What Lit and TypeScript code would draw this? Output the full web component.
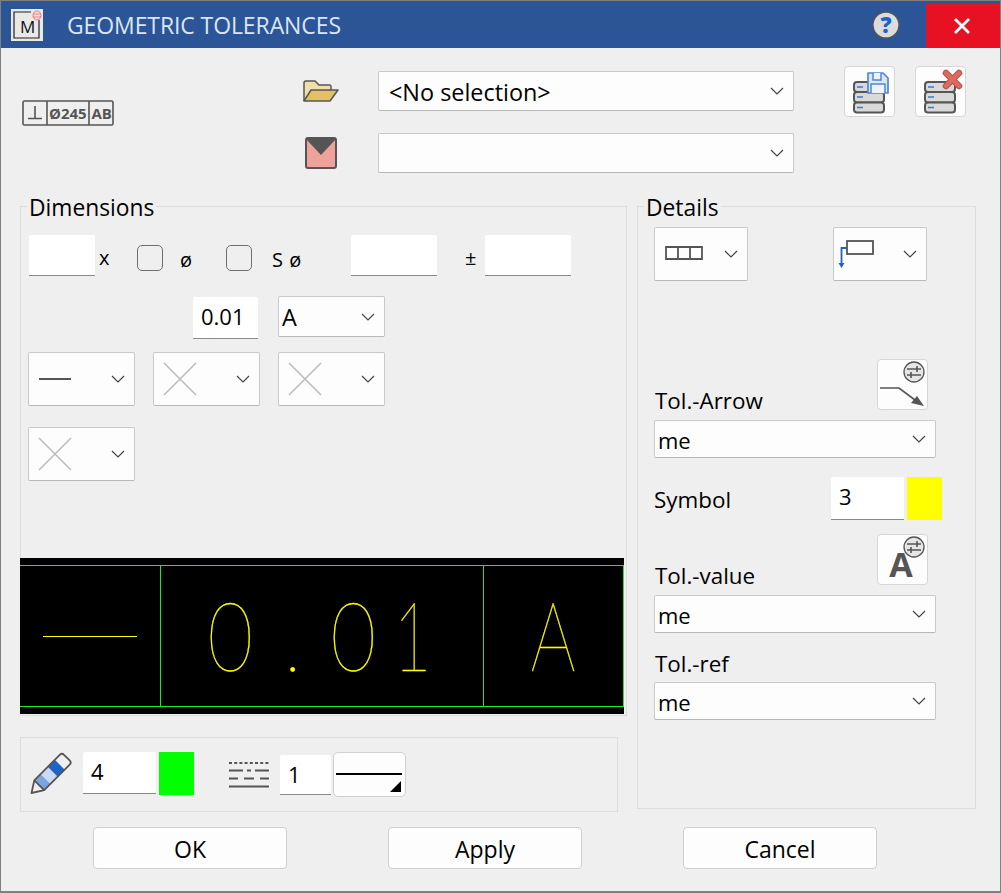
import { LitElement, html, css, svg } from "lit";
import { customElement } from "lit/decorators.js";

const chevron = html`<svg class="chev" width="14" height="8" viewBox="0 0 14 8"><path d="M1 1l6 6 6-6" fill="none" stroke="#444" stroke-width="1.2"/></svg>`;
const cross = html`<svg width="32" height="32" viewBox="0 0 32 32"><path d="M0 0L32 32M32 0L0 32" stroke="#bdbdbd" stroke-width="1.6"/></svg>`;
const dbStack = svg`
  <g fill="#d9d9d9" stroke="#555" stroke-width="2">
    <rect x="10" y="16" width="30" height="10" rx="3"/>
    <rect x="10" y="26" width="30" height="10.500" rx="3"/>
    <rect x="10" y="36.500" width="30" height="10" rx="3"/>
  </g>
  <path d="M13 21h6M13 31h6M13 41.500h6" stroke="#3b78d0" stroke-width="1.600"/>`;
const sliders = svg`
  <circle cx="37" cy="13" r="10" fill="#e6e6e6" stroke="#555" stroke-width="1.300"/>
  <path d="M30 10h14M30 16h14M40 7v6M34 13v6" stroke="#555" stroke-width="1.600" fill="none"/>`;

@customElement("app-root")
export class AppRoot extends LitElement {
  static styles = css`
    :host { display: block; width: 1001px; height: 893px; font-family: "Open Sans", "Noto Sans", sans-serif; color: #000; }
    * { box-sizing: border-box; }
    svg { display: block; flex: none; overflow: visible; }
    .frame { width: 1001px; height: 893px; background: #efefef; border: 1px solid #808080; border-bottom-width: 2px; overflow: hidden; }
    .titlebar { height: 47px; background: #2b5597; display: flex; align-items: center; padding-left: 10px; }
    .title { margin-left: 24px; color: #dbe6f4; font-size: 23px; line-height: 47px; padding-top: 1px; flex: 1; white-space: nowrap; letter-spacing: -0.1px; }
    .help { margin-right: 26px; }
    .close { width: 74px; height: 45px; align-self: flex-end; background: #e81123; display: flex; align-items: center; justify-content: center; padding-right: 2px; }

    .top { height: 158px; display: flex; align-items: flex-start; }
    .tol { margin: 52px 0 0 21px; }
    .pickers { margin: 23px 0 0 189px; display: grid; grid-template-columns: 36px 416px; column-gap: 39px; row-gap: 22px; align-items: center; }
    .saves { margin: 18px 0 0 50px; display: flex; gap: 20px; }
    .iconbtn { width: 51px; height: 51px; background: #fdfdfd; border: 1px solid #d6d6d6; border-radius: 4px; position: relative; }
    .iconbtn svg { position: absolute; left: -1px; top: -1px; }

    .main { display: flex; margin-left: 19px; gap: 10px; height: 606px; align-items: flex-start; }
    .leftcol { width: 607px; display: flex; flex-direction: column; }
    .group { position: relative; border: 1px solid #dcdcdc; }
    .legend { position: absolute; left: 6px; top: -14px; padding: 0 2px; background: #efefef; font-size: 22.800px; line-height: 30px; white-space: nowrap; }
    .dims { height: 510px; padding-top: 28px; }
    .row { display: flex; align-items: flex-start; padding-left: 8px; }
    .row.first { height: 41px; }
    .row.combos { padding-left: 7px; }

    .input { background: #fff; border-bottom: 1px solid #888; border-radius: 2px 2px 0 0; font-size: 22px; line-height: 39px; padding-left: 8px; flex: none; }
    .select { background: #fdfdfd; border: 1px solid #c9c9c9; border-bottom-color: #b8b8b8; border-radius: 2px; display: flex; align-items: center; font-size: 23.400px; padding: 0 9px 0 10px; flex: none; white-space: nowrap; }
    .sel-text { padding-top: 1px; }
    .chev { margin-left: auto; }
    .select.me { padding: 2px 9px 0 3px; height: 38px; width: 282px; font-size: 22px; }
    .select.me .chev { margin-top: -2px; }
    .select.letter { padding-left: 3px; }
    .select.ic { padding: 0 9px 0 10px; height: 54px; width: 107px; }
    .lab { font-size: 20px; line-height: 41px; flex: none; margin-top: 2px; }
    .lab.low { margin-top: 4px; }
    .check { width: 26px; height: 26px; margin-top: 10px; border: 1.500px solid #6f6f6f; border-radius: 5px; background: #efefef; flex: none; }
    .canvas { display: block; margin: 77px 0 0 -1px; background: #000; }
    .glyphs { font-family: Lato, Roboto, sans-serif; font-weight: 100; font-size: 96px; fill: #ffff00; stroke: #ffff00; stroke-width: 0.35px; }
    .dot { font-size: 66px; }

    .panel { margin-top: 21px; width: 598px; height: 75px; border: 1px solid #dcdcdc; display: flex; align-items: center; padding-left: 9px; }
    .swatch { flex: none; width: 35px; height: 43px; }
    .linebtn { width: 73px; height: 45px; margin-left: 2px; background: #fdfdfd; border: 1px solid #d0d0d0; border-radius: 5px; }

    .details { width: 339px; height: 603px; padding: 20px 0 0 16px; }
    .drow { display: flex; gap: 85px; }
    .labelrow { display: flex; width: 274px; height: 61px; justify-content: space-between; }
    .dlabel { font-size: 22.400px; line-height: 30px; align-self: flex-end; margin-bottom: 4px; padding-left: 1px; }
    .symbol { display: flex; margin-top: 19px; align-items: flex-start; }
    .symbol .dlabel { width: 177px; align-self: center; margin: 3px 0 0 0; padding-left: 0; }
    .ref { height: 49px; display: flex; }
    .ref .dlabel { margin-bottom: 3px; }

    .buttons { display: flex; gap: 101px; margin: 15px 0 0 92px; }
    .btn { width: 194px; height: 42px; background: #fdfdfd; border: 1px solid #d0d0d0; border-radius: 4px; text-align: center; font-size: 23px; line-height: 42px; }
  `;

  private sel(content: unknown, cls: string, w?: number, h?: number) {
    const s = w ? `width:${w}px;height:${h}px` : "";
    return html`<div class="select ${cls}" style=${s}>${content}${chevron}</div>`;
  }

  private input(w: number, h: number, v = "", pad = 8) {
    return html`<div class="input" style="width:${w}px;height:${h}px;padding-left:${pad}px">${v}</div>`;
  }

  render() {
    return html`<div class="frame">
      <div class="titlebar">
        <svg width="32" height="32" viewBox="0 0 32 32">
          <rect width="32" height="32" fill="#e9e9e9"/>
          <path d="M3 3h25v26H3z" fill="none" stroke="#222" stroke-width="1.200"/>
          <rect x="20" y="0" width="12" height="11" fill="#e9e9e9"/>
          <text x="9" y="24" font-size="17" font-family="Open Sans" fill="#111">M</text>
          <ellipse cx="26" cy="6.500" rx="4" ry="4.500" fill="#f6dada" stroke="#e77" stroke-width="1"/>
          <path d="M22 5h8M22 8h8" stroke="#e77" stroke-width="0.800"/>
        </svg>
        <div class="title">GEOMETRIC TOLERANCES</div>
        <svg class="help" width="28" height="28" viewBox="0 0 28 28">
          <circle cx="14" cy="14" r="13" fill="#dcdcdc" stroke="#555" stroke-width="1.300"/>
          <text x="14" y="22" text-anchor="middle" font-size="22" font-weight="800" font-family="Open Sans" fill="#1c62c7">?</text>
        </svg>
        <div class="close">
          <svg width="16" height="16" viewBox="0 0 16 16"><path d="M1 1l14 14M15 1L1 15" stroke="#fff" stroke-width="2.800"/></svg>
        </div>
      </div>

      <div class="top">
        <svg class="tol" width="92" height="26" viewBox="0 0 92 26">
          <rect x="1" y="1" width="90" height="24" rx="1.500" fill="none" stroke="#555" stroke-width="1.600"/>
          <path d="M25 1v24M67 1v24M6 18.500h14M13 6v12.500" fill="none" stroke="#555" stroke-width="1.600"/>
          <text x="27" y="18.500" font-size="15" font-weight="700" font-family="Open Sans" fill="#555">Ø245</text>
          <text x="69.500" y="18.500" font-size="15" font-weight="700" font-family="Open Sans" fill="#555">AB</text>
        </svg>
        <div class="pickers">
          <svg width="36" height="22" viewBox="0 0 36 22">
            <path d="M1 21V3q0-2 2-2h9l4 4h11q1 0 1 2v5" fill="#f0dfa6" stroke="#555" stroke-width="1.500"/>
            <path d="M1 21l7-11h27l-8 11z" fill="#e3c063" stroke="#555" stroke-width="1.500" stroke-linejoin="round"/>
          </svg>
          ${this.sel(html`<span class="sel-text">&lt;No selection&gt;</span>`, "", 416, 40)}
          <svg style="margin-left:2px" width="32" height="32" viewBox="0 0 32 32">
            <rect x="1" y="1" width="30" height="30" rx="2" fill="#eda29a" stroke="#555" stroke-width="2"/>
            <path d="M1 1h30v1L16 18 1 2z" fill="#555"/>
          </svg>
          ${this.sel("", "", 416, 40)}
        </div>
        <div class="saves">
          <div class="iconbtn">
            <svg width="51" height="51" viewBox="0 0 51 51">
              ${dbStack}
              <path d="M24 7h15l5 5v15H24z" fill="#dbe6f6" stroke="#4f86da" stroke-width="1.700" stroke-linejoin="round"/>
              <path d="M29 7v7h8V7M27 27v-9h14v9" fill="#eef3fb" stroke="#4f86da" stroke-width="1.500"/>
            </svg>
          </div>
          <div class="iconbtn">
            <svg width="51" height="51" viewBox="0 0 51 51">
              ${dbStack}
              <path d="M31 7l13 13M44 7L31 20" stroke="#a9574f" stroke-width="6.500" stroke-linecap="round"/>
              <path d="M31 7l13 13M44 7L31 20" stroke="#e0685c" stroke-width="4.500" stroke-linecap="round"/>
            </svg>
          </div>
        </div>
      </div>

      <div class="main">
        <div class="leftcol">
          <div class="group dims">
            <div class="legend">Dimensions</div>
            <div class="row first">
              ${this.input(66, 41)}
              <div class="lab" style="margin-left:4px;width:11px">x</div>
              <div class="check" style="margin-left:27px"></div>
              <div class="lab low" style="margin-left:17px;width:15px">ø</div>
              <div class="check" style="margin-left:31px"></div>
              <div class="lab low" style="margin-left:20px;width:30px;word-spacing:1px">S ø</div>
              <div style="margin-left:49px">${this.input(86, 41)}</div>
              <div class="lab" style="margin-left:28px;width:12px">±</div>
              <div style="margin-left:8px">${this.input(86, 41)}</div>
            </div>
            <div class="row" style="margin-top:20px">
              <div style="margin:1px 0 0 164px">${this.input(65, 42, "0.01")}</div>
              <div style="margin-left:20px">${this.sel("A", "letter", 107, 41)}</div>
            </div>
            <div class="row combos" style="margin-top:13px;gap:18px">
              ${this.sel(html`<svg width="32" height="2" viewBox="0 0 32 2"><rect width="32" height="2" fill="#555"/></svg>`, "ic")}
              ${this.sel(cross, "ic")}
              ${this.sel(cross, "ic")}
            </div>
            <div class="row combos" style="margin-top:21px">
              ${this.sel(cross, "ic")}
            </div>
            <svg class="canvas" width="604" height="156" viewBox="0 0 604 156">
              <path d="M0 7.500H604M0 148.500H604M140.500 7.500V148.500M463.500 7.500V148.500M603.500 7.500V148.500" stroke="#1fe81f" stroke-width="1" fill="none"/>
              <path d="M23 78.500H117" stroke="#ffff00" stroke-width="1"/>
              <g class="glyphs">
                <text transform="translate(187.500 113) scale(0.82 1)">0</text>
                <text class="dot" x="265" y="113">.</text>
                <text transform="translate(310.500 113) scale(0.82 1)">0</text>
                <text transform="translate(373.500 113) scale(0.68 1)">1</text>
                <text transform="translate(510.500 113) scale(0.74 1)">A</text>
              </g>
            </svg>
          </div>
          <div class="panel">
            <svg width="40" height="40" viewBox="0 0 40 40">
              <g transform="translate(1.500 38) rotate(-45)">
                <path d="M11 -7h9v14h-9z" fill="#7aa5e0"/>
                <rect x="20" y="-7" width="10" height="14" fill="#c9daf2"/>
                <rect x="30" y="-7" width="10" height="14" fill="#1e63c7"/>
                <path d="M0 0L11 -7V7z" fill="#efefef"/>
                <path d="M0 0L11 -7H47q3 0 3 3v8q0 3-3 3H11zM11 -7V7" fill="none" stroke="#555" stroke-width="1.800" stroke-linejoin="round"/>
              </g>
            </svg>
            <div style="margin:-3px 0 0 13px">${this.input(73, 42, "4")}</div>
            <div class="swatch" style="margin:-3px 0 0 3px;background:#00ff00"></div>
            <svg style="margin-left:35px" width="40" height="26" viewBox="0 0 40 26">
              <path d="M0 1h40" stroke="#555" stroke-width="2" stroke-dasharray="3 2.200"/>
              <path d="M0 8.500h14M18 8.500h4M26 8.500h14" stroke="#555" stroke-width="2"/>
              <path d="M0 16.500h9M15 16.500h10M31 16.500h9" stroke="#555" stroke-width="2"/>
              <path d="M0 24.500h40" stroke="#555" stroke-width="2"/>
            </svg>
            <div style="margin-left:11px">${this.input(51, 40, "1")}</div>
            <div class="linebtn">
              <svg width="71" height="43" viewBox="0 0 71 43">
                <path d="M2 21h66" stroke="#000" stroke-width="2"/>
                <path d="M67 28v11H56z" fill="#000"/>
              </svg>
            </div>
          </div>
        </div>

        <div class="group details">
          <div class="legend">Details</div>
          <div class="drow">
            ${this.sel(html`<svg style="margin-top:-2px" width="38" height="14" viewBox="0 0 38 14"><path d="M1 1h36v12H1zM13 1v12M25 1v12" fill="none" stroke="#555" stroke-width="1.800"/></svg>`, "ic", 94, 54)}
            ${this.sel(html`<svg style="margin:2px 0 0 -7px" width="38" height="30" viewBox="0 0 38 30"><rect x="10" y="1" width="26" height="13" fill="none" stroke="#555" stroke-width="1.800"/><path d="M10 8H4.500v17" fill="none" stroke="#1f62c6" stroke-width="1.800"/><path d="M1.500 23h6l-3 5z" fill="#1f62c6"/></svg>`, "ic", 94, 54)}
          </div>
          <div class="labelrow" style="margin-top:78px">
            <div class="dlabel">Tol.-Arrow</div>
            <div class="iconbtn">
              <svg width="51" height="51" viewBox="0 0 51 51">
                ${sliders}
                <path d="M3 29h19l20 15" fill="none" stroke="#555" stroke-width="1.600"/>
                <path d="M34 44l6-7 7 10z" fill="#555"/>
              </svg>
            </div>
          </div>
          ${this.sel("me", "me")}
          <div class="symbol">
            <div class="dlabel">Symbol</div>
            ${this.input(73, 43, "3")}
            <div class="swatch" style="margin-left:3px;background:#ffff00"></div>
          </div>
          <div class="labelrow" style="margin-top:14px">
            <div class="dlabel">Tol.-value</div>
            <div class="iconbtn">
              <svg width="51" height="51" viewBox="0 0 51 51">
                <text x="24" y="43" text-anchor="middle" font-size="34" font-weight="700" font-family="Open Sans" fill="#555">A</text>
                ${sliders}
              </svg>
            </div>
          </div>
          ${this.sel("me", "me")}
          <div class="ref"><div class="dlabel">Tol.-ref</div></div>
          ${this.sel("me", "me")}
        </div>
      </div>

      <div class="buttons">
        <div class="btn">OK</div>
        <div class="btn">Apply</div>
        <div class="btn">Cancel</div>
      </div>
    </div>`;
  }
}
